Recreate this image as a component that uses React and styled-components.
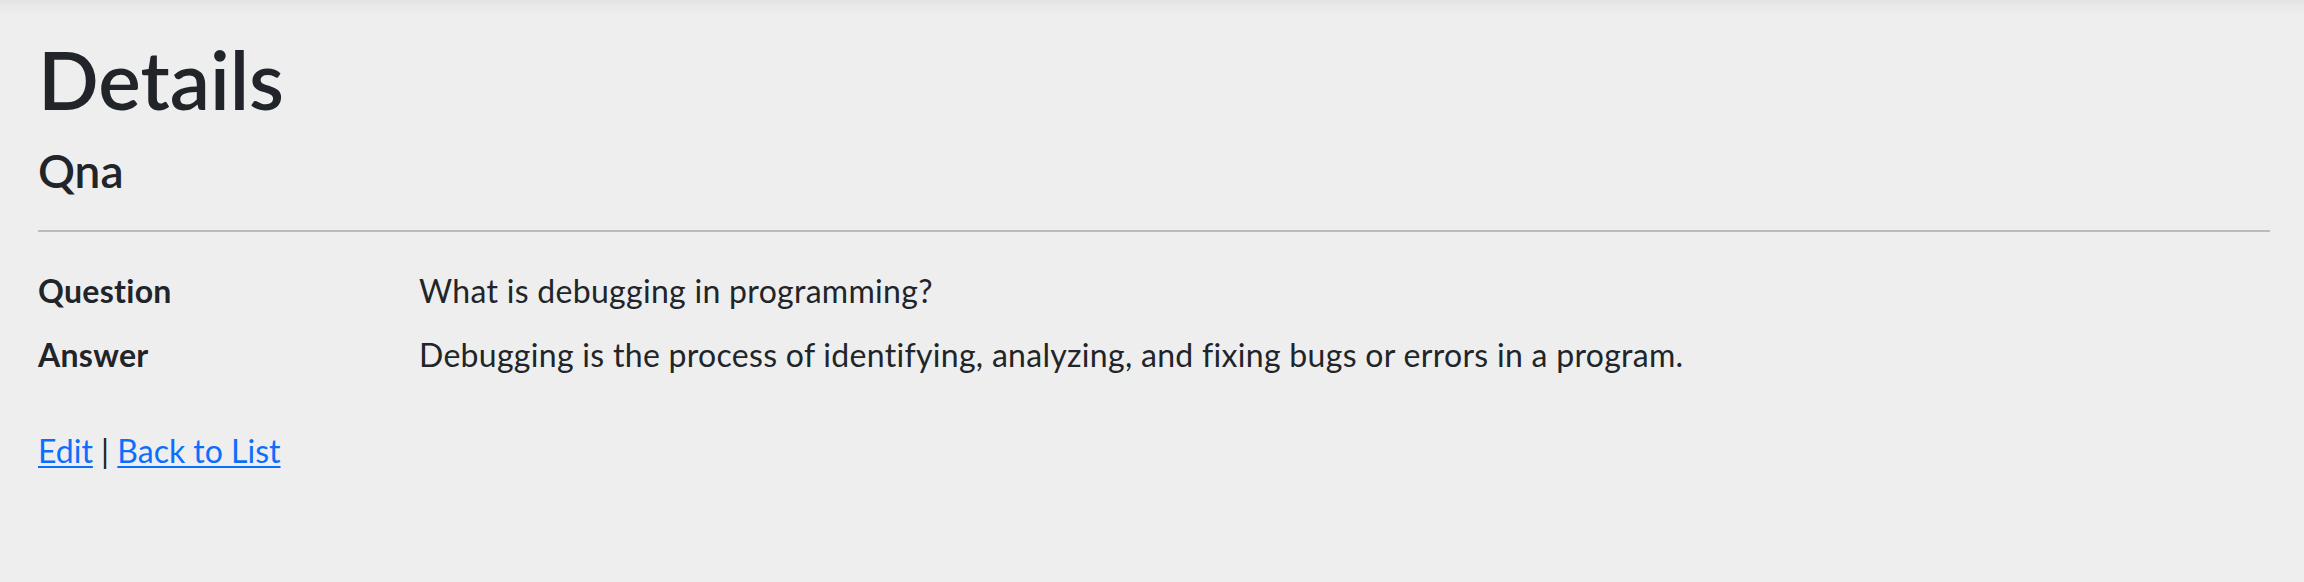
import React from "react";
import styled, { createGlobalStyle } from "styled-components";

const Global = createGlobalStyle`
  html, body { margin: 0; padding: 0; }
  body {
    min-height: 582px;
    background: linear-gradient(to bottom, #e3e3e3 0px, #eaeaea 8px, #eeeeee 16px) no-repeat, #eeeeee;
    color: #212529;
    font-family: Lato, "Noto Sans", sans-serif;
    -webkit-font-smoothing: antialiased;
  }
`;

const Main = styled.main`
  padding: 31px 34px 0 38px;
`;

const Title = styled.h1`
  margin: 0 0 16px;
  font-size: 80px;
  font-weight: 600;
  line-height: 1.2;
`;

const Subtitle = styled.h4`
  margin: 0;
  font-size: 46px;
  font-weight: 600;
  line-height: 1.2;
`;

const Rule = styled.hr`
  margin: 32px 0 35px;
  border: 0;
  border-top: 2px solid #bbbbbb;
  height: 0;
`;

const List = styled.dl`
  display: grid;
  grid-template-columns: 381px 1fr;
  row-gap: 16px;
  margin: 0 0 48px;
  font-size: 32px;
  line-height: 48px;
  letter-spacing: 0.3px;
`;

const Term = styled.dt`
  font-weight: 700;
  margin: 0;
`;

const Desc = styled.dd`
  margin: 0;
`;

const Actions = styled.div`
  font-size: 32px;
  line-height: 48px;
`;

const Link = styled.a`
  color: #0d6efd;
  text-decoration: underline;
  text-decoration-thickness: 2px;
  text-underline-offset: 3px;
`;

const rows = [
  { label: "Question", value: "What is debugging in programming?" },
  {
    label: "Answer",
    value:
      "Debugging is the process of identifying, analyzing, and fixing bugs or errors in a program.",
  },
];

export default function App() {
  return (
    <>
      <Global />
      <Main>
        <Title>Details</Title>
        <Subtitle>Qna</Subtitle>
        <Rule />
        <List>
          {rows.map((r) => (
            <React.Fragment key={r.label}>
              <Term>{r.label}</Term>
              <Desc>{r.value}</Desc>
            </React.Fragment>
          ))}
        </List>
        <Actions>
          <Link href="#">Edit</Link> | <Link href="#">Back to List</Link>
        </Actions>
      </Main>
    </>
  );
}
